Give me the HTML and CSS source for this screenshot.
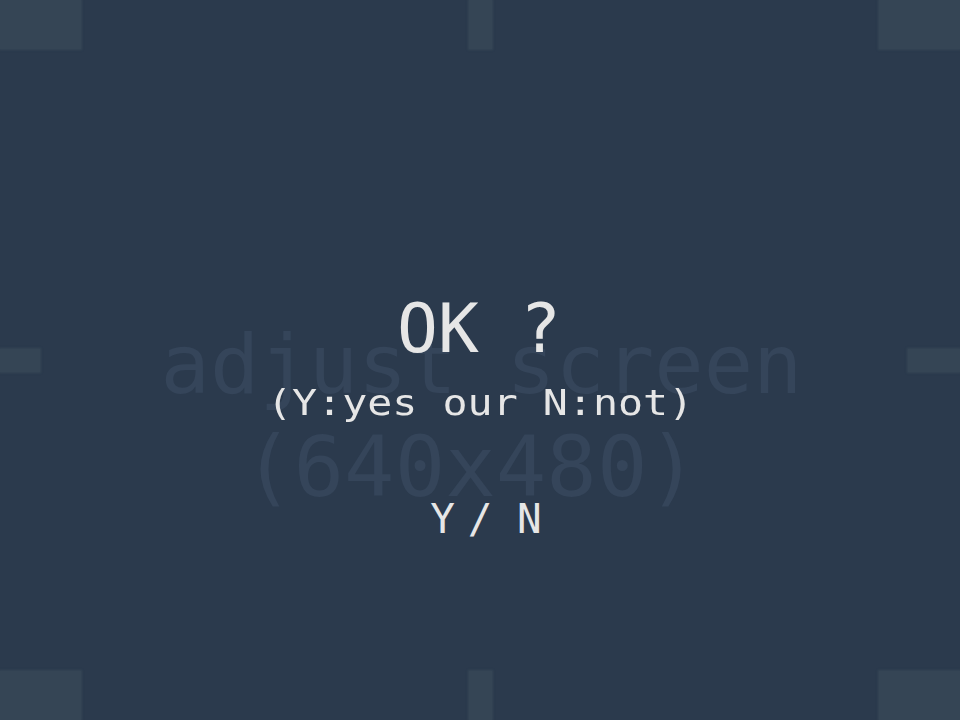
FILE: index.html
```html
<!DOCTYPE html>
<html>
<head>
<meta charset="utf-8">
<link rel="stylesheet" href="styles.css">
</head>
<body>
<div class="stage">
  <div class="mark mark-tl"></div>
  <div class="mark mark-tc"></div>
  <div class="mark mark-tr"></div>
  <div class="mark mark-ml"></div>
  <div class="mark mark-mr"></div>
  <div class="mark mark-bl"></div>
  <div class="mark mark-bc"></div>
  <div class="mark mark-br"></div>
  <div class="layers">
    <div class="ghost">
      <div class="ghost-line">adjust screen</div>
      <div class="ghost-line ghost-size">(640x480)</div>
    </div>
    <div class="prompt">
      <div class="title">OK ?</div>
      <div class="hint">(Y:yes our N:not)</div>
      <div class="choice"><span class="choice-y">Y</span> / N</div>
    </div>
  </div>
</div>
</body>
</html>
```
FILE: styles.css
```css
html, body {
  margin: 0;
  padding: 0;
  background: #2b3a4d;
}
.stage {
  position: relative;
  width: 960px;
  height: 720px;
  overflow: hidden;
  background: #2b3a4d;
  font-family: "DejaVu Sans Mono", "Liberation Mono", monospace;
}
.mark {
  position: absolute;
  background: #354555;
  box-shadow: 0 0 2px 1px #354555;
  filter: blur(0.6px);
}
.mark-tl { left: 0; top: 0; width: 81px; height: 49px; }
.mark-tc { left: 469px; top: 0; width: 23px; height: 49px; }
.mark-tr { left: 879px; top: 0; width: 81px; height: 49px; }
.mark-ml { left: 0; top: 349px; width: 40px; height: 23px; }
.mark-mr { left: 908px; top: 349px; width: 52px; height: 23px; }
.mark-bl { left: 0; top: 671px; width: 81px; height: 49px; }
.mark-bc { left: 469px; top: 671px; width: 23px; height: 49px; }
.mark-br { left: 879px; top: 671px; width: 81px; height: 49px; }

.layers {
  display: grid;
  width: 960px;
  height: 720px;
}
.ghost, .prompt {
  grid-area: 1 / 1;
  display: flex;
  flex-direction: column;
  align-items: center;
  white-space: pre;
}
.ghost {
  padding-top: 313px;
  padding-left: 3px;
  color: #35455a;
  font-size: 82px;
  line-height: 103px;
}
.ghost-size {
  font-size: 84px;
  margin-right: 22px;
}
.prompt {
  padding-top: 296px;
  color: #e6e6e6;
}
.title {
  font-size: 68px;
  line-height: 66px;
  padding-right: 2px;
}
.hint {
  margin-top: 21px;
  font-size: 35px;
  line-height: 40px;
  transform: scaleX(1.19);
}
.choice {
  margin-top: 76px;
  padding-left: 12px;
  font-size: 41px;
  line-height: 41px;
}
.choice-y {
  margin-right: -12px;
}
```
